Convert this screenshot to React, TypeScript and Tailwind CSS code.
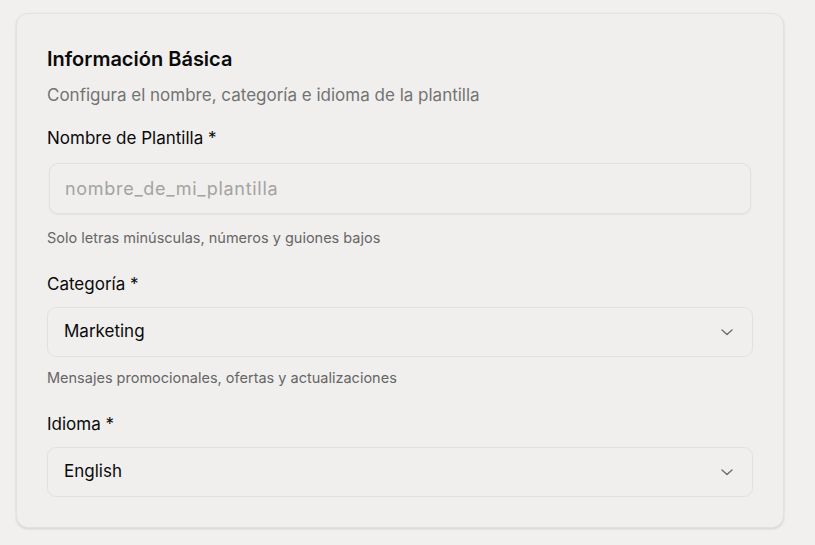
import React from "react";

function Chevron() {
  return (
    <svg width="20" height="20" viewBox="0 0 24 24" fill="none" stroke="#6e6e6e" strokeWidth="1.7" strokeLinecap="round" strokeLinejoin="round">
      <path d="m6 9.5 6 5.5 6-5.5" />
    </svg>
  );
}

function Select({ value }: { value: string }) {
  return (
    <div className="flex h-[50px] items-center justify-between rounded-[9px] border border-[#e3e1de] bg-[#f0efed] pl-[16px] pr-[15px] text-[17px] text-[#0a0a0a]">
      <span>{value}</span>
      <Chevron />
    </div>
  );
}

export default function App() {
  return (
    <div className="min-h-[545px] w-[815px] bg-[#f1f0ee] pl-[16px] pr-[31px] pt-[13px]" style={{ fontFamily: "Inter, 'Noto Sans', sans-serif" }}>
      <div className="rounded-[12px] border border-[#e4e2df] bg-[#f0efed] px-[30px] pb-[30px] pt-[33px] shadow-sm">
        <h2 className="text-[20px] font-semibold leading-[24px] text-[#0a0a0a]">Información Básica</h2>
        <p className="mt-[12px] text-[17px] leading-[24px] text-[#737373]">Configura el nombre, categoría e idioma de la plantilla</p>

        <div className="mt-[21px] text-[17px] leading-[20px] text-[#0a0a0a]">Nombre de Plantilla *</div>
        <div className="mx-[2px] mt-[15px] flex h-[51px] items-center rounded-[9px] border border-[#e3e1de] bg-[#f0efed] px-[15px] text-[18px] tracking-[0.7px] text-[#a3a3a3] shadow-xs">
          nombre_de_mi_plantilla
        </div>
        <div className="mt-[14px] text-[14.5px] leading-[20px] text-[#666666]">Solo letras minúsculas, números y guiones bajos</div>

        <div className="mt-[26px] text-[17px] leading-[20px] text-[#0a0a0a]">Categoría *</div>
        <div className="mt-[13px]">
          <Select value="Marketing" />
        </div>
        <div className="mt-[11px] text-[14.5px] leading-[20px] text-[#666666]">Mensajes promocionales, ofertas y actualizaciones</div>

        <div className="mt-[26px] text-[17px] leading-[20px] text-[#0a0a0a]">Idioma *</div>
        <div className="mt-[13px]">
          <Select value="English" />
        </div>
      </div>
    </div>
  );
}
